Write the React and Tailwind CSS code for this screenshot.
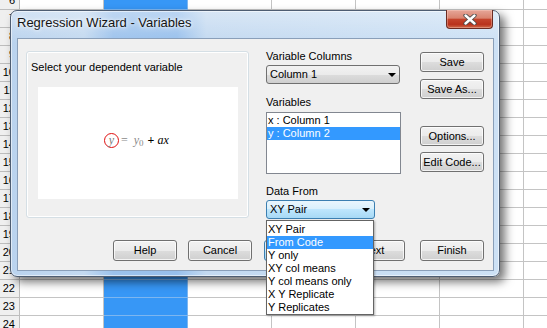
import React from 'react';

const rows = [6, 7, 8, 9, 10, 11, 12, 13, 14, 15, 16, 17, 18, 19, 20, 21, 22, 23, 24];
const cols = ['A', 'B', 'C', 'D', 'E', 'F', 'G'];
const dataFrom = ['XY Pair', 'From Code', 'Y only', 'XY col means', 'Y col means only', 'X Y Replicate', 'Y Replicates'];

const btn =
  'h-[20px] w-[64px] shrink-0 rounded-[3px] border border-[#707070] bg-[linear-gradient(180deg,#f2f2f2_0%,#ebebeb_50%,#dddddd_50%,#cfcfcf_100%)] shadow-[inset_0_0_0_1px_rgba(255,255,255,0.75)] text-[11px] leading-[18px] text-black text-center';

function Arrow() {
  return (
    <svg width="8" height="4" viewBox="0 0 8 4" className="shrink-0">
      <polygon points="0,0 8,0 4,4" fill="#000" />
    </svg>
  );
}

function Sheet() {
  return (
    <div className="flex flex-col mt-[-8px]">
      {rows.map((n) => (
        <div key={n} className="flex h-[18px] shrink-0">
          <div className="w-[20px] shrink-0 bg-[#efefef] border-r border-b border-[#bdbdbd] text-right pr-[4px] text-[11px] leading-[17px] text-black">
            {n}
          </div>
          {cols.map((c) => (
            <div
              key={c}
              className={
                c === 'B'
                  ? 'w-[84px] shrink-0 bg-[#3797f6] border-r border-b border-[#7db6f0]'
                  : 'w-[84px] shrink-0 bg-white border-r border-b border-[#c4c4c4]'
              }
            />
          ))}
        </div>
      ))}
    </div>
  );
}

function CloseButton() {
  return (
    <div className="mt-[-1px] w-[47px] h-[19px] rounded-b-[4px] border border-t-0 border-[#6b2b22] bg-[linear-gradient(180deg,#e6a699_0%,#d9836f_45%,#c4432c_52%,#b9321c_80%,#cf6a4a_100%)] shadow-[inset_0_0_0_1px_rgba(255,220,210,0.35)] flex items-center justify-center">
      <svg width="14" height="11" viewBox="0 0 14 11">
        <path d="M2.5 1.5 L11.5 9.5 M11.5 1.5 L2.5 9.5" stroke="#4a4a4a" strokeWidth="4.2" strokeLinecap="round" />
        <path d="M2.5 1.5 L11.5 9.5 M11.5 1.5 L2.5 9.5" stroke="#fff" strokeWidth="2.4" strokeLinecap="round" />
      </svg>
    </div>
  );
}

function Formula() {
  return (
    <div className="mt-[45px] ml-[66px] h-[16px] flex items-center font-['Liberation_Serif',serif] italic text-[12px] leading-[16px]">
      <div className="w-[15px] h-[15px] rounded-full border border-[#e01010] flex items-center justify-center text-[#7a7a7a]">
        y
      </div>
      <span className="ml-[2px] not-italic text-[#8a8a8a]">=</span>
      <span className="ml-[6px] text-[#8a8a8a]">
        y<sub className="not-italic text-[9px]">0</sub>
      </span>
      <span className="ml-[4px] not-italic font-bold text-black">+</span>
      <span className="ml-[3px] text-black">ax</span>
    </div>
  );
}

export default function App() {
  return (
    <div className="relative w-[547px] h-[328px] overflow-hidden bg-white font-['Liberation_Sans',Arial,sans-serif] text-[11px] text-black">
      <Sheet />

      {/* dialog window */}
      <div className="absolute left-[10px] top-[10px] w-[490px] h-[267px] rounded-[7px] border border-[#4e5d72] bg-[linear-gradient(180deg,rgba(255,255,255,0.35)_0%,rgba(255,255,255,0)_12%),linear-gradient(90deg,#bad3ee_0%,#c3d9f0_15%,#9cc2ec_21%,#98c0ec_34%,#c3d9f0_40%,#cde1f5_100%)] shadow-[5px_5px_10px_rgba(0,0,0,0.55),inset_0_0_0_1px_rgba(255,255,255,0.55)] flex flex-col">
        <div className="h-[27px] shrink-0 flex items-start justify-between pl-[6px] pr-[6px]">
          <div className="mt-[4px] text-[13px] leading-[16px] text-[#141414] [text-shadow:0_0_6px_#fff,0_0_3px_#fff]">
            Regression Wizard - Variables
          </div>
          <CloseButton />
        </div>

        <div className="relative ml-[6px] w-[477px] h-[233px] bg-[#f0f0f0] border border-[#8a9fb9] flex flex-col">
          <div className="flex items-start h-[180px]">
            {/* group box */}
            <div className="ml-[8px] mt-[12px] w-[223px] h-[167px] rounded-[3px] border border-[#d5dfe5] shadow-[inset_0_0_0_1px_#fff] flex flex-col">
              <div className="mt-[8px] ml-[4px] h-[14px] leading-[14px]">Select your dependent variable</div>
              <div className="mt-[13px] ml-[11px] w-[200px] h-[112px] bg-white flex flex-col">
                <Formula />
              </div>
            </div>

            {/* variables column */}
            <div className="ml-[17px] mt-[10px] w-[135px] flex flex-col">
              <div className="h-[14px] leading-[14px]">Variable Columns</div>
              <div className="mt-[2px] w-[134px] h-[19px] rounded-[3px] border border-[#707070] bg-[linear-gradient(180deg,#f2f2f2_0%,#ebebeb_50%,#dddddd_50%,#cfcfcf_100%)] flex items-center justify-between pl-[3px] pr-[3px]">
                <span className="leading-[17px]">Column 1</span>
                <Arrow />
              </div>
              <div className="mt-[11px] h-[14px] leading-[14px]">Variables</div>
              <div className="mt-[3px] w-[135px] h-[62px] border border-[#828790] bg-white pt-[1px] flex flex-col">
                <div className="h-[13px] leading-[13px] pl-[1px]">x : Column 1</div>
                <div className="h-[13px] leading-[13px] pl-[1px] bg-[#3399ff] text-white">y : Column 2</div>
              </div>
              <div className="mt-[10px] h-[14px] leading-[14px]">Data From</div>
              <div className="mt-[2px] w-[109px] h-[19px] rounded-[3px] border border-[#3c7fb1] bg-[linear-gradient(180deg,#eaf6fd_0%,#d9f0fc_50%,#bee6fd_50%,#a7d9f5_100%)] flex items-center justify-between pl-[3px] pr-[4px]">
                <span className="leading-[17px]">XY Pair</span>
                <Arrow />
              </div>
            </div>

            {/* side buttons */}
            <div className="ml-[19px] mt-[13px] flex flex-col">
              <div className={btn}>Save</div>
              <div className={`mt-[7px] ${btn}`}>Save As...</div>
              <div className={`mt-[27px] ${btn}`}>Options...</div>
              <div className={`mt-[6px] ${btn}`}>Edit Code...</div>
            </div>
          </div>

          {/* bottom buttons */}
          <div className="mt-[21px] flex items-start">
            <div className={`ml-[95px] h-[21px] ${btn}`}>Help</div>
            <div className={`ml-[11px] h-[21px] ${btn}`}>Cancel</div>
            {/* default button, hidden under the open list */}
            <div className="ml-[12px] h-[21px] w-[64px] shrink-0 rounded-[3px] border border-[#3c7fb1] bg-[linear-gradient(180deg,#eaf6fd_0%,#d9f0fc_50%,#bee6fd_50%,#a7d9f5_100%)]" />
            <div className={`ml-[13px] h-[21px] ${btn}`}>Next</div>
            <div className={`ml-[15px] h-[21px] ${btn}`}>Finish</div>
          </div>

          {/* open drop-down list */}
          <div className="absolute left-[248px] top-[181px] w-[108px] border border-[#646464] bg-white pt-[2px] shadow-[1px_1px_2px_rgba(0,0,0,0.3)] flex flex-col">
            {dataFrom.map((item) => (
              <div
                key={item}
                className={
                  item === 'From Code'
                    ? 'h-[13px] leading-[13px] pl-[1px] bg-[#3399ff] text-white'
                    : 'h-[13px] leading-[13px] pl-[1px]'
                }
              >
                {item}
              </div>
            ))}
          </div>
        </div>
      </div>
    </div>
  );
}
